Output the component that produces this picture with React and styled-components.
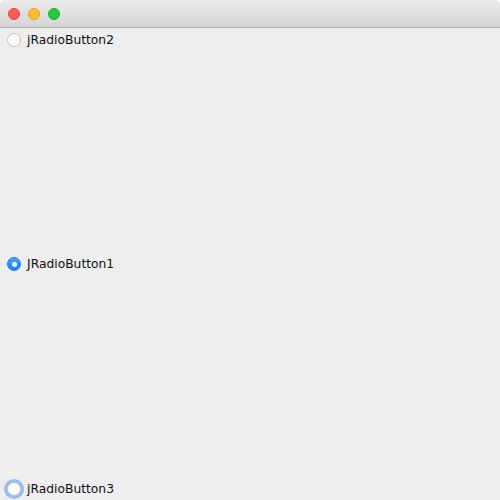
import React from 'react';
import styled, { createGlobalStyle } from 'styled-components';

const Global = createGlobalStyle`
    html, body {
        margin: 0;
        padding: 0;
        background: #ffffff;
    }
`;

const Window = styled.div`
    width: 500px;
    height: 500px;
    display: flex;
    flex-direction: column;
    background: #eeeeee;
    border-radius: 5px 5px 0 0;
    overflow: hidden;
    font-family: "DejaVu Sans", "Liberation Sans", sans-serif;
`;

const TitleBar = styled.div`
    height: 27px;
    flex: 0 0 27px;
    display: flex;
    align-items: center;
    gap: 8px;
    padding-left: 8px;
    background: linear-gradient(#ebebeb, #d4d4d4);
    border-bottom: 1px solid #b1b1b1;
`;

const Light = styled.span`
    width: 12px;
    height: 12px;
    border-radius: 50%;
    box-sizing: border-box;
    background: ${p => p.color};
    border: 0.5px solid ${p => p.edge};
`;

const Content = styled.div`
    flex: 1;
    display: flex;
    flex-direction: column;
    justify-content: space-between;
    padding: 0 0 0 7px;
`;

const Row = styled.label`
    height: 24px;
    display: flex;
    align-items: center;
    gap: 6px;
    font-size: 12.3px;
    color: #111;
    transform: translateY(${p => p.shift || 0}px);
`;

const Radio = styled.span`
    width: 14px;
    height: 14px;
    border-radius: 50%;
    box-sizing: border-box;
    display: flex;
    align-items: center;
    justify-content: center;
    background: ${p => (p.checked ? 'linear-gradient(#4aa1fd, #1a7cf8)' : '#ffffff')};
    border: 1px solid ${p => (p.checked ? '#1f7ef5' : '#c2c2c2')};
    box-shadow: ${p => (p.focused ? '0 0 0 3px #94bdf3' : 'none')};

    &::after {
        content: '';
        display: ${p => (p.checked ? 'block' : 'none')};
        width: 5px;
        height: 5px;
        border-radius: 50%;
        background: #ffffff;
    }
`;

const buttons = [
    { label: 'jRadioButton2' },
    { label: 'JRadioButton1', checked: true },
    { label: 'jRadioButton3', focused: true, shift: 1 },
];

export default function App() {
    return (
        <>
            <Global />
            <Window>
                <TitleBar>
                    <Light color="#fe5f57" edge="#e0443e" />
                    <Light color="#febc2e" edge="#dea123" />
                    <Light color="#28c840" edge="#1aab29" />
                </TitleBar>
                <Content>
                    {buttons.map(b => (
                        <Row key={b.label} shift={b.shift}>
                            <Radio checked={b.checked} focused={b.focused} />
                            {b.label}
                        </Row>
                    ))}
                </Content>
            </Window>
        </>
    );
}
